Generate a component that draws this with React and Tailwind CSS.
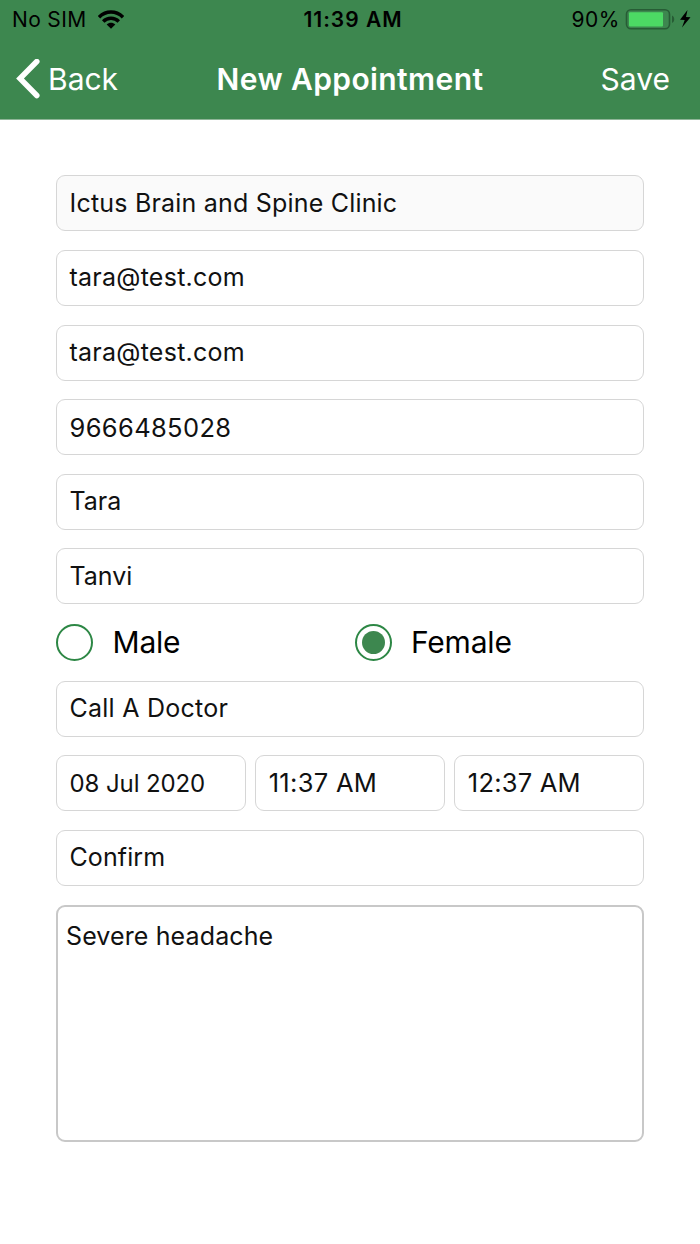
const fields = [
  { value: "Ictus Brain and Spine Clinic", className: "bg-[#fafafa] tracking-[0.2px]" },
  { value: "tara@test.com", className: "tracking-[0.25px]" },
  { value: "tara@test.com", className: "tracking-[0.25px]" },
  { value: "9666485028", className: "pt-px text-[25.5px] tracking-[0.35px]" },
  { value: "Tara", className: "" },
  { value: "Tanvi", className: "" }
];

const slots = [
  { value: "08 Jul 2020", className: "pt-0.5 text-[24px] tracking-[-0.1px]" },
  { value: "11:37 AM", className: "text-[25.5px] tracking-[0.3px]" },
  { value: "12:37 AM", className: "text-[25.5px] tracking-[0.2px]" }
];

function Field({ value, className = "" }) {
  return (
    <div className={`flex h-14 shrink-0 items-center whitespace-nowrap rounded-[9px] border border-[#d6d6d6] pl-[12.5px] text-[#111] ${className}`}>
      {value}
    </div>
  );
}

function Radio({ label, checked }) {
  return (
    <div className="flex items-center text-[30px] tracking-[-0.2px] text-black">
      <span className="mr-[19.5px] flex size-[37px] items-center justify-center rounded-full border-2 border-[#2d8745]">
        {checked && <span className="size-[23px] rounded-full bg-[#3d874f]" />}
      </span>
      {label}
    </div>
  );
}

function StatusBar() {
  return (
    <div className="grid h-[38px] grid-cols-[200px_1fr_200px] items-center text-[21px] text-black">
      <div className="flex items-center gap-[11px] pl-3">
        <span className="pt-0.5 tracking-[0.35px]">No SIM</span>
        <svg className="h-[19px] w-[26px]" viewBox="0 0 26 19" fill="none" stroke="#000" strokeWidth="3.5">
          <path d="M1 7.2C8 .4 18 .4 25 7.2" />
          <path d="M5.2 11.5c4.4-4.2 11.2-4.2 15.6 0" />
          <path d="M13 18.8l-4.3-4.3c2.4-2.3 6.2-2.3 8.6 0z" fill="#000" stroke="none" />
        </svg>
      </div>
      <div className="pl-1.5 pt-0.5 text-center font-semibold tracking-[1px]">11:39 AM</div>
      <div className="flex items-center justify-end pr-2">
        <span className="pt-0.5 tracking-[0.5px]">90%</span>
        <svg className="ml-[5px] h-[22px] w-[67px]" viewBox="0 0 67 22">
          <rect x="1.5" y="1.8" width="43" height="19" rx="4.5" fill="none" stroke="#275c35" strokeWidth="1.6" />
          <rect x="4" y="4.3" width="34" height="14.2" rx="1" fill="#4cd964" />
          <path d="M47 7.5c3 1.500 3 6 0 7.500z" fill="#275c35" />
          <path d="M62.5 2L55 11.8l4.7.2L57 19.5 65.5 9.3 61 9z" fill="#000" />
        </svg>
      </div>
    </div>
  );
}

export default function App() {
  return (
    <div className="min-h-[1244px] w-[700px] bg-white font-['Inter',sans-serif]">
      <header className="h-[120px] border-b border-[#8fb598] bg-[#3d874f]">
        <StatusBar />
        <div className="grid h-[82px] grid-cols-[200px_300px_200px] items-center text-[30px] text-white">
          <div className="flex items-center pl-4">
            <svg className="mr-2 h-10 w-6" viewBox="0 0 24 40" fill="none" stroke="#fff" strokeWidth="5.5" strokeLinecap="round">
              <path d="M20.8 2.5L4 19.500l16.800 17" />
            </svg>
            <span>Back</span>
          </div>
          <h1 className="text-center font-semibold tracking-[0.4px]">New Appointment</h1>
          <div className="pr-[30px] text-right">Save</div>
        </div>
      </header>

      <main className="px-14 pt-[55.4px] text-[25px]">
        <div className="flex flex-col gap-[18.6px]">
          {fields.map((f, idx) => (
            <Field key={idx} value={f.value} className={f.className} />
          ))}
        </div>

        <div className="grid h-[76.3px] grid-cols-[298.5px_1fr] items-center">
          <Radio label="Male" />
          <Radio label="Female" checked />
        </div>

        <div className="flex flex-col gap-[18.6px]">
          <Field value="Call A Doctor" className="tracking-[0.25px]" />
          <div className="grid grid-cols-3 gap-[9.5px]">
            {slots.map((s) => (
              <Field key={s.value} value={s.value} className={s.className} />
            ))}
          </div>
          <Field value="Confirm" className="tracking-[0.1px]" />
          <div className="mt-[0.5px] h-[237.5px] rounded-[9px] border-2 border-[#c8c8c8] px-2 pt-[11px] tracking-[0.12px] text-[#111]">
            Severe headache
          </div>
        </div>
      </main>
    </div>
  );
}
